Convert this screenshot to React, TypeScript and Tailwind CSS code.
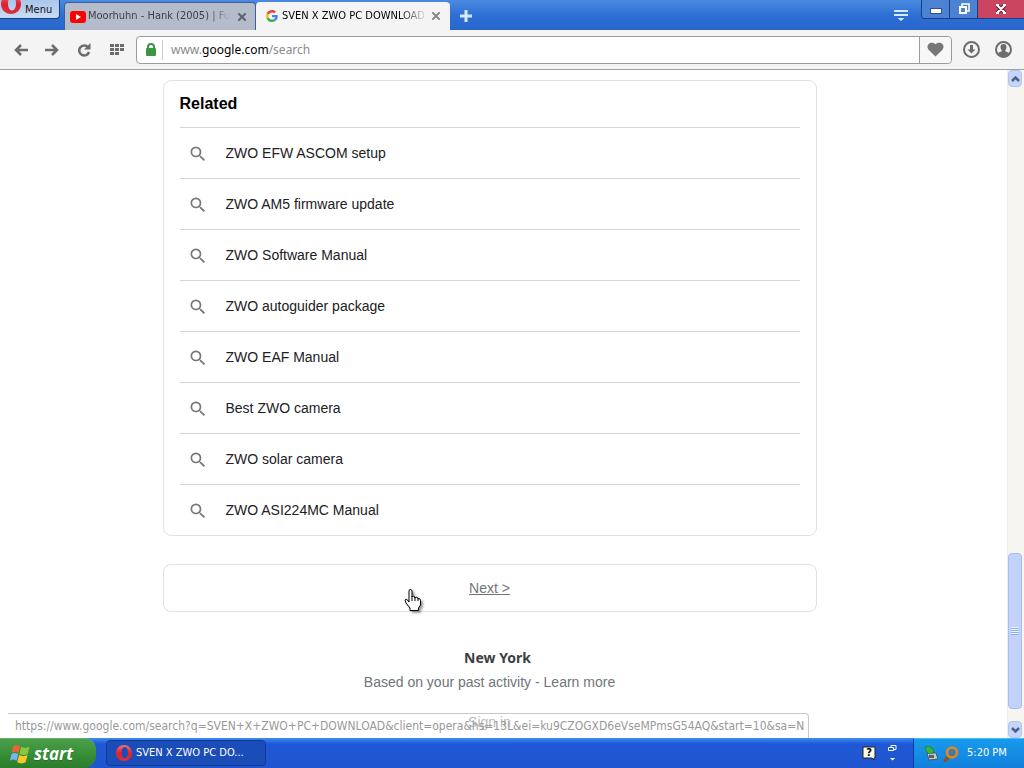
import React from 'react';

const RELATED = [
    'ZWO EFW ASCOM setup',
    'ZWO AM5 firmware update',
    'ZWO Software Manual',
    'ZWO autoguider package',
    'ZWO EAF Manual',
    'Best ZWO camera',
    'ZWO solar camera',
    'ZWO ASI224MC Manual',
];

const STATUS_URL = 'https://www.google.com/search?q=SVEN+X+ZWO+PC+DOWNLOAD&client=opera&hs=13L&ei=ku9CZOGXD6eVseMPmsG54AQ&start=10&sa=N';

const OperaLogo: React.FC<{ className: string }> = ({ className }) => (
    <svg className={className} viewBox="0 0 20 20" aria-hidden="true">
        <defs>
            <linearGradient id="opera" x1="0" y1="0" x2="0" y2="1">
                <stop offset="0" stopColor="#f0717a" />
                <stop offset="0.5" stopColor="#e0202e" />
                <stop offset="1" stopColor="#d8303e" />
            </linearGradient>
        </defs>
        <path fill="url(#opera)" fillRule="evenodd" d="M10 0C4.500 0 0 4.300 0 10s4.500 10 10 10 10-4.300 10-10S15.500 0 10 0zm1 2.500c2.500 0 4 3 4 7s-1.500 7-4 7-4-3-4-7 1.500-7 4-7z" />
    </svg>
);

const CloseIcon: React.FC = () => (
    <svg className="size-2" viewBox="0 0 8 8" aria-hidden="true">
        <path d="M1 1l6 6M7 1L1 7" stroke="currentColor" strokeWidth="2" strokeLinecap="square" />
    </svg>
);

const SearchIcon: React.FC = () => (
    <svg className="mt-px size-5 shrink-0 text-[#777]" viewBox="0 0 24 24" fill="currentColor" aria-hidden="true">
        <path d="M15.500 14h-.79l-.28-.27A6.471 6.471 0 0 0 16 9.500 6.500 6.500 0 1 0 9.500 16c1.610 0 3.090-.59 4.230-1.570l.27.28v.79l5 4.990L20.490 19l-4.990-5zm-6 0C7.010 14 5 11.990 5 9.500S7.010 5 9.500 5 14 7.010 14 9.500 11.990 14 9.500 14z" />
    </svg>
);

const TitleBar: React.FC = () => (
    <header className="flex h-[30px] shrink-0 items-start bg-linear-to-b from-[#4a8ae0] via-[#2e6fd4] to-[#2865cc]">
        <button className="flex h-[19px] w-[60px] shrink-0 items-center gap-1 overflow-hidden rounded-br border-r border-b border-[#173f86] bg-linear-to-b from-[#a9c6ec] to-[#c9dbf2] pt-[2px] pl-px text-[11px] text-[#111]">
            <OperaLogo className="-mt-3 size-5 shrink-0" />
            Menu
        </button>
        <div className="ml-1 flex h-full min-w-0 items-end">
            <div className="flex h-7 w-48 items-center rounded-t border border-b-0 border-[#3a5f9c] bg-[#b4bccc] pr-[5px] pl-[5px] text-[11px] text-[#3c4048]">
                <svg className="mr-[2px] h-3 w-4 shrink-0" viewBox="0 0 16 12" aria-hidden="true">
                    <rect width="16" height="12" rx="3" fill="#f00" />
                    <path d="M6 3l5 3-5 3z" fill="#fff" />
                </svg>
                <span className="flex-1 overflow-hidden mask-r-from-85% whitespace-nowrap">Moorhuhn - Hank (2005) | Full</span>
                <button className="ml-1 p-1 text-[#5d626c]" aria-label="Close tab"><CloseIcon /></button>
            </div>
            <div className="flex h-7 w-[194px] items-center rounded-t bg-[#f4f4f4] pr-[6px] pl-[10px] text-[11px] text-black">
                <svg className="mr-1 size-3 shrink-0" viewBox="0 0 48 48" aria-hidden="true">
                    <path fill="#EA4335" d="M24 9.500c3.540 0 6.710 1.220 9.210 3.600l6.850-6.850C35.900 2.380 30.470 0 24 0 14.620 0 6.510 5.380 2.560 13.220l7.980 6.190C12.430 13.720 17.740 9.500 24 9.500z" />
                    <path fill="#4285F4" d="M46.980 24.550c0-1.570-.15-3.090-.38-4.550H24v9.020h12.940c-.58 2.960-2.260 5.480-4.780 7.180l7.730 6c4.510-4.180 7.090-10.360 7.090-17.650z" />
                    <path fill="#FBBC05" d="M10.530 28.590c-.48-1.450-.76-2.990-.76-4.590s.27-3.140.76-4.590l-7.980-6.190C.92 16.460 0 20.120 0 24c0 3.880.92 7.540 2.560 10.780l7.970-6.190z" />
                    <path fill="#34A853" d="M24 48c6.480 0 11.930-2.130 15.890-5.810l-7.730-6c-2.150 1.450-4.920 2.300-8.160 2.300-6.260 0-11.570-4.220-13.470-9.910l-7.980 6.190C6.510 42.620 14.620 48 24 48z" />
                </svg>
                <span className="flex-1 overflow-hidden mask-r-from-80% whitespace-nowrap">SVEN X ZWO PC DOWNLOAD</span>
                <button className="p-1 text-[#888]" aria-label="Close tab"><CloseIcon /></button>
            </div>
            <button className="flex h-7 w-[31px] items-center justify-center" aria-label="New tab">
                <svg className="size-3" viewBox="0 0 12 12" aria-hidden="true">
                    <path d="M6 0v12M0 6h12" stroke="#d3ecff" strokeWidth="3" />
                </svg>
            </button>
        </div>
        <button className="mt-2 mr-3 ml-auto p-px" aria-label="Tab menu">
            <svg className="h-3 w-[14px]" viewBox="0 0 14 12" aria-hidden="true">
                <path d="M0 2h14M0 6h14" stroke="#d5ecff" strokeWidth="2" />
                <path d="M3.500 9h7L7 12z" fill="#d5ecff" />
            </svg>
        </button>
        <div className="flex h-[19px] overflow-hidden rounded-bl border border-t-0 border-r-0 border-[#173f86]">
            <button className="flex w-7 items-center justify-center border-r border-[#173f86] bg-[#4c82d2]" aria-label="Minimize">
                <span className="mt-1 h-1 w-[10px] bg-white ring-1 ring-[#2b4f8c]"></span>
            </button>
            <button className="flex w-7 items-center justify-center border-r border-[#173f86] bg-[#4c82d2]" aria-label="Restore">
                <svg className="size-3" viewBox="0 0 12 12" fill="none" aria-hidden="true">
                    <path d="M4 3V1h7v7H9" stroke="#fff" strokeWidth="1.500" />
                    <rect x="2" y="4" width="6" height="6" stroke="#fff" strokeWidth="2" />
                </svg>
            </button>
            <button className="flex w-[46px] items-center justify-center bg-[#cb4460]" aria-label="Close">
                <svg className="h-[10px] w-3" viewBox="0 0 12 10" aria-hidden="true">
                    <path d="M2 1l8 8M10 1L2 9" stroke="#6d1d31" strokeWidth="4" />
                    <path d="M2 1l8 8M10 1L2 9M1 1h3M8 1h3M1 9h3M8 9h3" stroke="#fff" strokeWidth="2" />
                </svg>
            </button>
        </div>
    </header>
);

const Toolbar: React.FC = () => (
    <nav className="flex h-10 shrink-0 items-center border-b border-[#a0a0a0] bg-[#f4f4f4] pl-[14px] text-[#6c6c6c]">
        <button aria-label="Back">
            <svg className="h-3 w-[14px]" viewBox="0 0 14 12" fill="none" stroke="currentColor" strokeWidth="2.500" aria-hidden="true">
                <path d="M14 6H3M7 1L2 6l5 5" />
            </svg>
        </button>
        <button className="ml-[17px]" aria-label="Forward">
            <svg className="h-3 w-[14px]" viewBox="0 0 14 12" fill="none" stroke="currentColor" strokeWidth="2.500" aria-hidden="true">
                <path d="M0 6h11M7 1l5 5-5 5" />
            </svg>
        </button>
        <button className="ml-[18px]" aria-label="Reload">
            <svg className="size-[14px]" viewBox="0 0 14 14" fill="none" aria-hidden="true">
                <path d="M11 4.200A5 5 0 1 0 12 9" stroke="currentColor" strokeWidth="2.500" />
                <path d="M13.500 0v6.500H7z" fill="currentColor" />
            </svg>
        </button>
        <button className="ml-[19px]" aria-label="Speed Dial">
            <svg className="h-3 w-[15px]" viewBox="0 0 15 12" fill="currentColor" aria-hidden="true">
                <path d="M0 0h4v3H0zM5 0h4v3H5zM10 0h4v3h-4zM0 4h4v3H0zM5 4h4v3H5zM10 4h4v3h-4zM0 8h4v3H0zM5 8h4v3H5z" />
            </svg>
        </button>
        <div className="ml-[11px] flex h-7 min-w-0 flex-1 items-center rounded border border-[#9b9b9b] bg-white">
            <svg className="ml-2 h-[14px] w-3 shrink-0" viewBox="0 0 12 14" aria-hidden="true">
                <path d="M3 7V4a3 3 0 0 1 6 0v3" fill="none" stroke="#3b9644" strokeWidth="2" />
                <rect x="1" y="5" width="10" height="8" rx="1" fill="#3b9644" />
            </svg>
            <span className="ml-[5px] h-5 w-px bg-[#ccc]"></span>
            <div className="ml-2 flex-1 truncate font-['Noto_Sans','Open_Sans',sans-serif] text-xs text-[#8a8a8a]">
                www.<span className="text-black">google.com</span>/search
            </div>
            <button className="flex h-full w-8 items-center justify-center rounded-r border-l border-[#9b9b9b] bg-[#f7f7f7]" aria-label="Bookmark">
                <svg className="h-[15px] w-[17px]" viewBox="0 0 17 15" aria-hidden="true">
                    <path d="M8.500 14.500L1.800 8C-2 4 3 -2.200 8.500 2.300 14 -2.200 19 4 15.200 8z" fill="#777" />
                </svg>
            </button>
        </div>
        <button className="ml-[11px]" aria-label="Downloads">
            <svg className="size-[17px]" viewBox="0 0 17 17" aria-hidden="true">
                <circle cx="8.500" cy="8.500" r="7.500" fill="none" stroke="#6c6c6c" strokeWidth="2" />
                <path d="M7 4h3v4.500h2.500l-4 4-4-4H7z" fill="#6c6c6c" />
            </svg>
        </button>
        <button className="mr-3 ml-[15px]" aria-label="Profile">
            <svg className="size-[17px]" viewBox="0 0 17 17" aria-hidden="true">
                <circle cx="8.500" cy="8.500" r="7.500" fill="none" stroke="#6c6c6c" strokeWidth="2" />
                <path d="M8.500 3a3 3 0 0 1 3 3c0 1.800-.7 2.500-1.200 3.200v1l4 1.800c-3 4.500-8.600 4.500-11.600 0l4-1.800v-1C6.200 8.500 5.500 7.800 5.500 6a3 3 0 0 1 3-3z" fill="#6c6c6c" />
            </svg>
        </button>
    </nav>
);

const Results: React.FC = () => (
    <div className="min-w-0 flex-1 overflow-hidden pt-[10px] pr-7 font-['Liberation_Sans',Arial,sans-serif] text-sm">
        <div className="mx-auto flex max-w-[654px] flex-col">
            <section className="rounded-lg border border-[#dfe1e5] px-4">
                <h2 className="h-[46px] pt-[11px] text-base leading-6 font-bold text-black">Related</h2>
                <ul>
                    {RELATED.map((item) => (
                        <li key={item} className="border-t border-[#d5d5d5]">
                            <a href="#" className="flex h-[50px] items-center gap-[18px] pl-2 text-[#202124]">
                                <SearchIcon />
                                {item}
                            </a>
                        </li>
                    ))}
                </ul>
            </section>
            <a href="#" className="mt-7 flex h-12 items-center justify-center rounded-lg border border-[#dfe1e5] text-[#70757a] underline">
                Next &gt;
            </a>
            <footer className="flex flex-col items-center pt-[34px] leading-6 text-[#70757a]">
                <strong className="pl-4 font-['Noto_Sans','Open_Sans',sans-serif] text-[#3c4043]">New York</strong>
                <p>Based on your past activity - <a href="#">Learn more</a></p>
                <a href="#" className="mt-4">Sign in</a>
            </footer>
        </div>
    </div>
);

const Chevron: React.FC<{ d: string }> = ({ d }) => (
    <svg className="h-[6px] w-[9px]" viewBox="0 0 9 6" fill="none" aria-hidden="true">
        <path d={d} stroke="#4d6185" strokeWidth="2.500" />
    </svg>
);

const ScrollBar: React.FC = () => (
    <div className="flex w-[17px] shrink-0 flex-col items-stretch border-l border-[#eeeee8] bg-[#f6f5f0] pr-[2px]">
        <button className="flex h-[17px] shrink-0 items-center justify-center rounded-sm border border-[#b3c5ee] bg-[#c6d5fc]" aria-label="Scroll up">
            <Chevron d="M1 5l3.500-3.500L8 5" />
        </button>
        <div className="flex-467"></div>
        <div className="flex flex-155 items-center justify-center rounded-sm border border-[#a9bdf0] bg-[#c3d2fb]">
            <div className="h-2 w-2 bg-[repeating-linear-gradient(#eef4fe_0_1px,#8cb0f8_1px_2px)]"></div>
        </div>
        <div className="flex-12"></div>
        <button className="flex h-[17px] shrink-0 items-center justify-center rounded-sm border border-[#b3c5ee] bg-[#c6d5fc]" aria-label="Scroll down">
            <Chevron d="M1 1l3.500 3.500L8 1" />
        </button>
    </div>
);

const Taskbar: React.FC = () => (
    <footer className="flex h-[30px] shrink-0 items-stretch bg-linear-to-b from-[#3f8cf0] via-[#1f58d6] via-20% to-[#1f55cf] text-[11px] text-white">
        <button className="flex w-24 shrink-0 items-center gap-1 rounded-r-xl border-t border-[#63b163] bg-linear-to-b from-[#4b9e4b] via-[#369136] to-[#2c7c2c] pl-[10px] font-['Open_Sans','Noto_Sans',sans-serif] text-[17px] font-bold italic text-shadow-xs">
            <svg className="size-5" viewBox="0 0 18 18" aria-hidden="true">
                <path d="M3 2q3-2 6 0L7.500 8q-3-2-6 0z" fill="#ee6234" />
                <path d="M10 2.500q3 2 7.500 0L16 9q-3.500 2-7.500 0z" fill="#8cc63f" />
                <path d="M1.300 9q3-2 6 0L6 15q-3-2-6 0z" fill="#7fb2f5" />
                <path d="M8.300 10q3.500 2 7.500 0L14 16.500q-3.500 2-7.500 0z" fill="#fbc72d" />
            </svg>
            start
        </button>
        <button className="my-[2px] ml-[10px] flex w-40 items-center gap-1 rounded-sm border border-[#123a94] bg-[#1b4db8] pl-[9px]">
            <OperaLogo className="size-4 shrink-0" />
            SVEN X ZWO PC DO...
        </button>
        <div className="mr-4 ml-auto flex items-center gap-3">
            <svg className="size-[14px]" viewBox="0 0 14 14" aria-hidden="true">
                <path d="M1 1h12v11h-1v2l-2-2H1z" fill="#fffff0" stroke="#222" />
                <text x="7" y="10" textAnchor="middle" fontSize="11" fontWeight="bold" fill="#000">?</text>
            </svg>
            <svg className="h-4 w-[9px]" viewBox="0 0 9 16" fill="none" aria-hidden="true">
                <path d="M3 2V.5h5v4H6M.5 2.500h5v3h-5z" stroke="#fff" />
                <path d="M2 13h5l-2.500 2.500z" fill="#fff" />
            </svg>
        </div>
        <div className="flex w-[111px] items-center border-t border-l border-t-[#3fc0f8] border-l-[#0b3ba0] bg-linear-to-b from-[#189bec] to-[#1280dc] pl-[10px]">
            <svg className="size-[15px]" viewBox="0 0 15 15" aria-hidden="true">
                <path d="M3 7h9l2 6-9 1z" fill="#c5ccd2" stroke="#4b5660" />
                <path d="M5 9h5v3H5z" fill="#51606d" />
                <path d="M1 1l4-1 5 4-1 3-4 1-3-3z" fill="#35b53a" stroke="#16702a" strokeWidth=".6" />
            </svg>
            <svg className="ml-1 size-4" viewBox="0 0 16 16" fill="none" aria-hidden="true">
                <path d="M6 10l-4 5" stroke="#9e4d0b" strokeWidth="3" strokeLinecap="round" />
                <circle cx="9" cy="6.500" r="5" stroke="#e8831d" strokeWidth="2.500" />
                <circle cx="9" cy="6.500" r="2" stroke="#a35a16" />
            </svg>
            <time className="ml-2 whitespace-nowrap">5:20 PM</time>
        </div>
    </footer>
);

const App: React.FC = () => {
    return (
        <div className="flex h-screen flex-col overflow-hidden bg-white font-['DejaVu_Sans_Condensed','Noto_Sans',sans-serif]">
            <TitleBar />
            <Toolbar />
            <main className="relative flex min-h-0 flex-1">
                <Results />
                <ScrollBar />
                <div className="absolute bottom-0 left-2 overflow-hidden rounded-tr border-t border-r border-[#c8c8c8] bg-white/50 py-[2px] pr-1 pl-[7px] text-xs leading-5 whitespace-nowrap text-[#999]">
                    {STATUS_URL}
                </div>
                <svg className="absolute top-[518px] left-[403px] h-6 w-5 drop-shadow-[2px_2px_1px_#0006]" viewBox="0 0 20 24" aria-hidden="true">
                    <path d="M6 14V3q0-1.500 1.500-1.500T9 3v6l1-1q2 0 2 2l1-1q2 0 2 2l1-.5q1.500.5 1.500 2V17l-2 3v2.500H7V20l-4-5-1-3q1-1.500 2.500 0z" fill="#fff" stroke="#000" strokeLinejoin="round" />
                    <path d="M9 8v5M12 9v4M15 10.500V13" stroke="#000" />
                </svg>
            </main>
            <Taskbar />
        </div>
    );
};

export default App;
